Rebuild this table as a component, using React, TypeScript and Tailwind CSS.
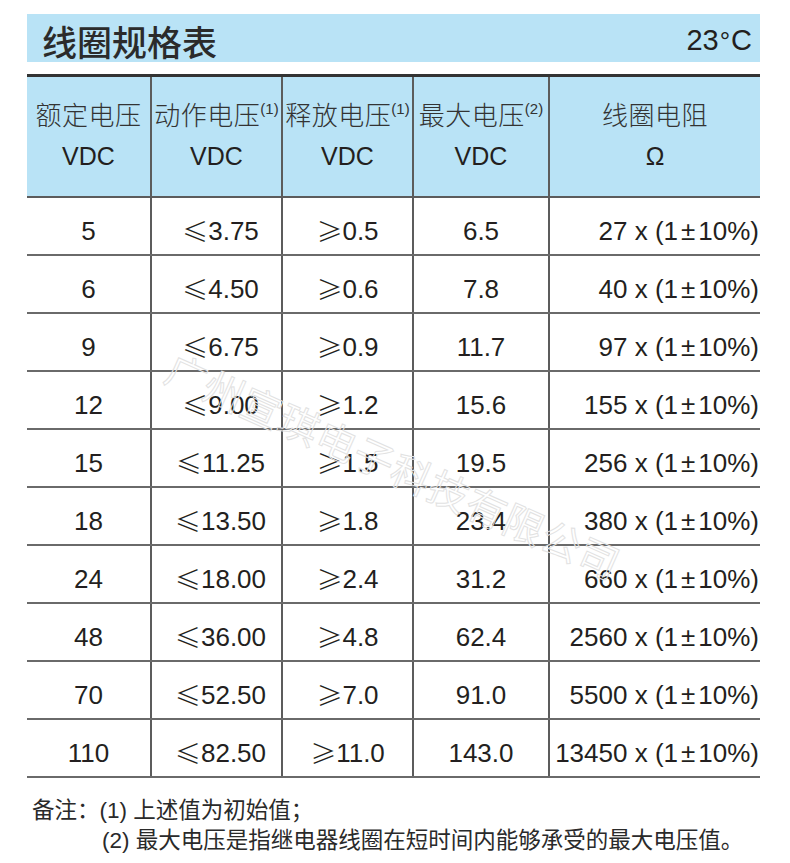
const rows = [
  { rated: '5', pick: '3.75', drop: '0.5', max: '6.5', res: '27' },
  { rated: '6', pick: '4.50', drop: '0.6', max: '7.8', res: '40' },
  { rated: '9', pick: '6.75', drop: '0.9', max: '11.7', res: '97' },
  { rated: '12', pick: '9.00', drop: '1.2', max: '15.6', res: '155' },
  { rated: '15', pick: '11.25', drop: '1.5', max: '19.5', res: '256' },
  { rated: '18', pick: '13.50', drop: '1.8', max: '23.4', res: '380' },
  { rated: '24', pick: '18.00', drop: '2.4', max: '31.2', res: '660' },
  { rated: '48', pick: '36.00', drop: '4.8', max: '62.4', res: '2560' },
  { rated: '70', pick: '52.50', drop: '7.0', max: '91.0', res: '5500' },
  { rated: '110', pick: '82.50', drop: '11.0', max: '143.0', res: '13450' },
];

const grid = 'grid grid-cols-[123px_131px_131px_136px_212px]';
const cell = 'flex items-center justify-center border-l-2 border-[#5c5c5c]';

function Head({ top, sup, bottom }: { top: string; sup?: string; bottom: string }) {
  return (
    <div className="flex flex-col items-center leading-[40px] pb-[2px]">
      <div className="text-[26px] font-light whitespace-nowrap text-[#333] tracking-[0.5px]">
        {top}
        {sup && <sup className="text-[15px] -top-[0.7em] tracking-normal">{sup}</sup>}
      </div>
      <div className="text-[25px]">{bottom}</div>
    </div>
  );
}

// CJK font draws ≤ / ≥ with the slanted bar, like the printed sheet
const Sym = ({ c }: { c: string }) => (
  <span className="font-['Noto_Sans_CJK_SC',sans-serif] font-light text-[26px] leading-none">{c}</span>
);

export default function App() {
  return (
    <div className="relative w-[790px] h-[863px] bg-white overflow-hidden text-[#231f20] font-['Liberation_Sans','Noto_Sans_CJK_SC',sans-serif]">
      <div className="pl-[27px] pt-[14px]">
        <div className="w-[733px] h-[48px] bg-[#b9e3f6] flex items-center justify-between pl-[15px] pr-[8px]">
          <span className="text-[35px] font-medium font-['Noto_Sans_CJK_SC',sans-serif] text-[#2b2b2b] pt-[6px]">线圈规格表</span>
          <span className="text-[29px] pt-[6px]">
            23<span className="text-[26px] mx-[1px]">°</span>C
          </span>
        </div>

        <div className="w-[733px] mt-[12px] border-t-[3px] border-[#333]">
          <div className={`${grid} h-[121px] bg-[#b9e3f6] border-b-2 border-[#5c5c5c]`}>
            <div className="flex items-center justify-center">
              <Head top="额定电压" bottom="VDC" />
            </div>
            <div className={cell}>
              <Head top="动作电压" sup="(1)" bottom="VDC" />
            </div>
            <div className={cell}>
              <Head top="释放电压" sup="(1)" bottom="VDC" />
            </div>
            <div className={cell}>
              <Head top="最大电压" sup="(2)" bottom="VDC" />
            </div>
            <div className={cell}>
              <Head top="线圈电阻" bottom="Ω" />
            </div>
          </div>

          {rows.map((r) => (
            <div key={r.rated} className={`${grid} h-[58px] border-b-2 border-[#6a6a6a] text-[26px] whitespace-nowrap`}>
              <div className="flex items-center justify-center pt-[10px]">{r.rated}</div>
              <div className={`${cell} pt-[10px] pl-[8px]`}>
                <Sym c="≤" />
                {r.pick}
              </div>
              <div className={`${cell} pt-[10px]`}>
                <Sym c="≥" />
                {r.drop}
              </div>
              <div className={`${cell} pt-[10px]`}>{r.max}</div>
              <div className={`${cell} justify-end pr-[1px] pt-[10px]`}>
                {r.res} x (1<span className="mx-[3px]">±</span>10%)
              </div>
            </div>
          ))}
        </div>

        <div className="mt-[18px] text-[22.5px] leading-[30px] whitespace-nowrap text-[#2a2a2a]">
          <div className="pl-[5px]">备注：(1) 上述值为初始值；</div>
          <div className="pl-[75px]">(2) 最大电压是指继电器线圈在短时间内能够承受的最大电压值。</div>
        </div>
      </div>

      <div className="pointer-events-none absolute left-[394px] top-[465px] -translate-x-1/2 -translate-y-1/2 rotate-[24deg] whitespace-nowrap text-[40px] tracking-[1px] text-transparent [-webkit-text-stroke:1px_#e2e2e2] font-['Noto_Sans_CJK_SC',sans-serif]">
        广州宣琪电子科技有限公司
      </div>
    </div>
  );
}
